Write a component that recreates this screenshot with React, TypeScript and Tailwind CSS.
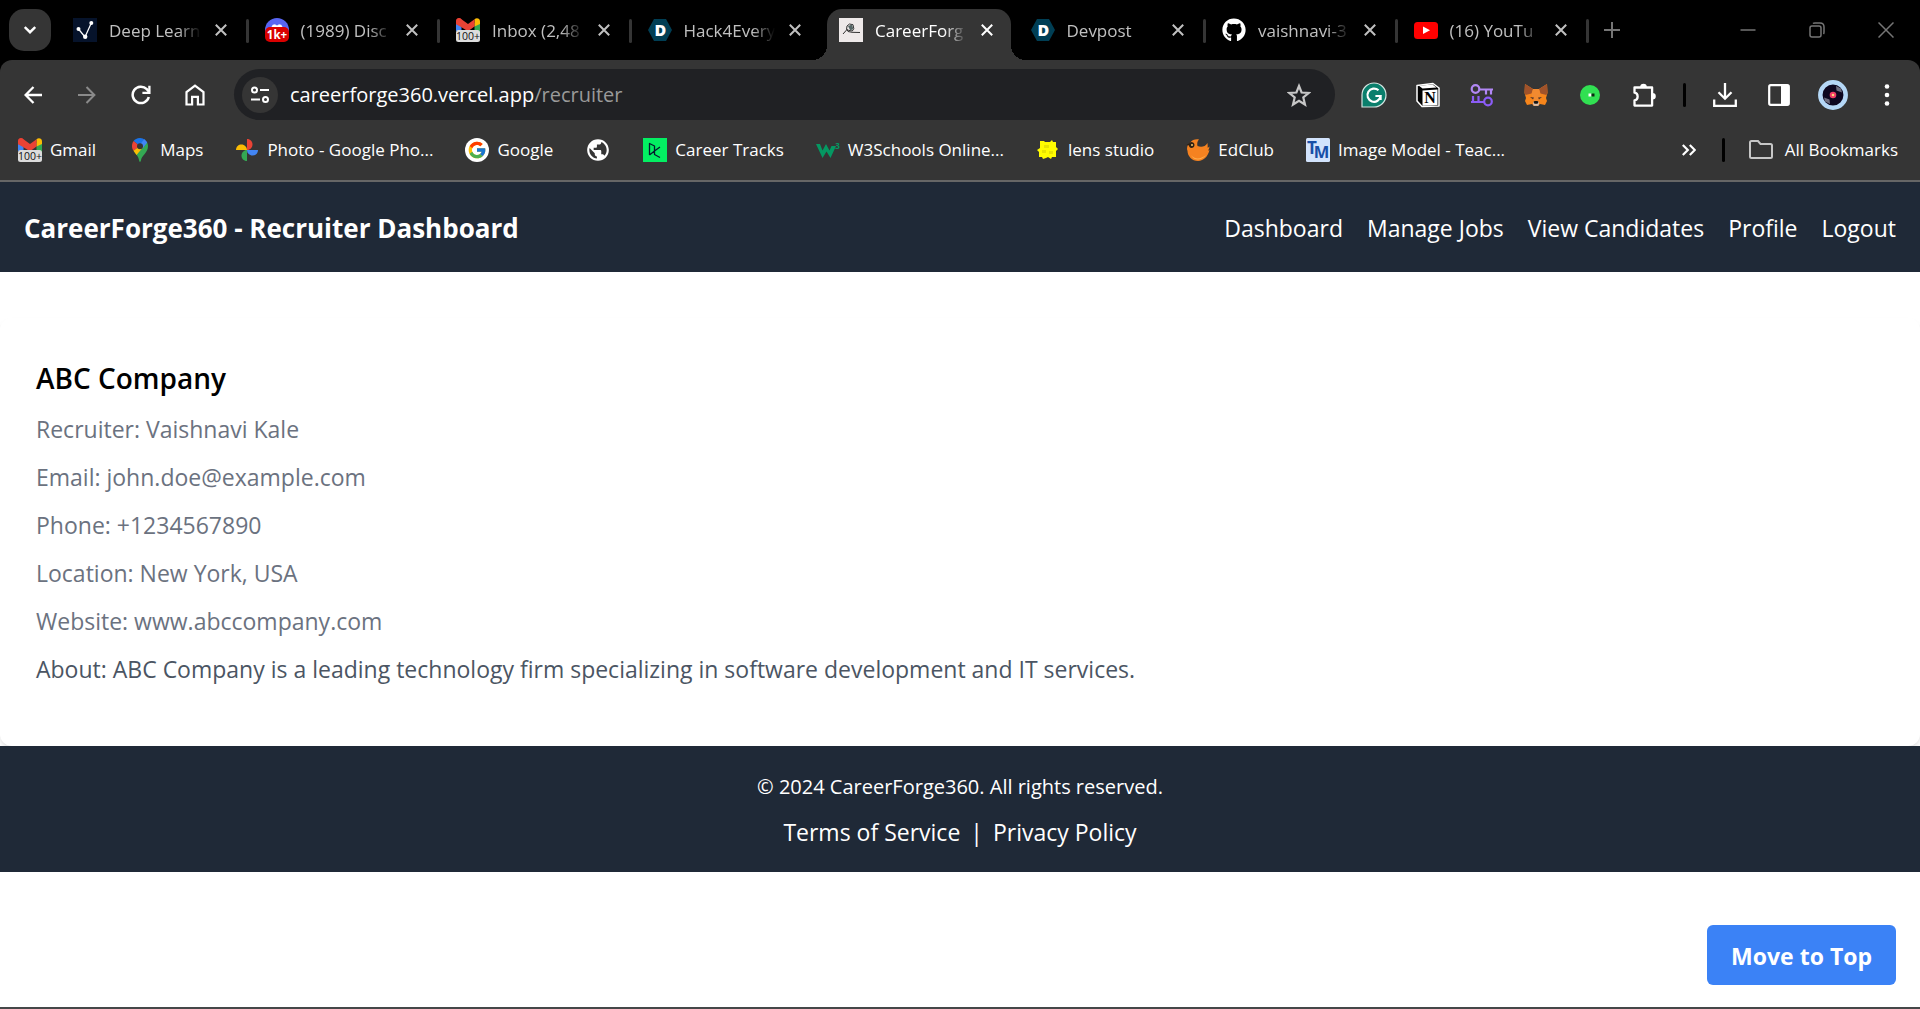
import React from 'react';
import { FaGithub } from 'react-icons/fa';
import { FcGoogle } from 'react-icons/fc';
import { MdPublic } from 'react-icons/md';

type IconProps = { className?: string };

const CloseIcon = ({ className }: IconProps) => (
  <svg className={className} viewBox="0 0 12 12" fill="none" stroke="currentColor" strokeWidth="2">
    <path d="M.8.8l10.4 10.4M11.2.8L.8 11.2" />
  </svg>
);

const NodesIcon = () => (
  <svg viewBox="0 0 24 24" className="size-6">
    <rect width="24" height="24" fill="#06132b" />
    <path d="M5.5 11l6.500 8 6.300-14" fill="none" stroke="#fff" strokeWidth="1.2" />
    <circle cx="5.5" cy="11" r="2" fill="#fff" />
    <circle cx="12.2" cy="18.7" r="2.2" fill="#fff" />
    <circle cx="18.3" cy="5" r="2" fill="#fff" />
  </svg>
);

const DiscordIcon = () => (
  <svg viewBox="0 0 24 24" className="size-6">
    <circle cx="12" cy="12" r="12" fill="#5865f2" />
    <path d="M6 11c.4-2 1.2-3.5 1.8-4.2l2.5-.6.6 1h2.2l.6-1 2.5.6c.6.7 1.4 2.2 1.8 4.2z" fill="#fff" />
    <rect y="9" width="24" height="15" rx="5" fill="#d90000" />
    <text x="12" y="20.5" textAnchor="middle" fontSize="11.5" fontWeight="700" fill="#fff">1k+</text>
  </svg>
);

const GmailIcon = () => (
  <svg viewBox="0 0 24 24" className="size-6">
    <path d="M0 4v9h5.500V5z" fill="#4285f4" />
    <path d="M18.500 5v15H24V4z" fill="#34a853" />
    <path d="M18.500 8.500V1.200c2-2 5.500-1 5.500 2V6z" fill="#fbbc04" />
    <path d="M5.500 8.500V1.200C3.500-.8 0 .2 0 3.200V6z" fill="#c5221f" />
    <path d="M0 3C.2 0 3.500-.8 5.500 1.200L12 6l6.500-4.800v7.300L12 13.300 0 6z" fill="#ea4335" />
    <rect y="12" width="24" height="12" rx="2.5" fill="#dcdcdc" />
    <text x="12" y="22" textAnchor="middle" fontSize="10.5" fontWeight="500" fill="#111">100+</text>
  </svg>
);

const DevpostIcon = () => (
  <svg viewBox="0 0 24 24" className="size-6">
    <path d="M6 1h12l6 11-6 11H6L0 12z" fill="#003e54" />
    <text x="12.3" y="17.7" textAnchor="middle" fontSize="16" fontWeight="800" fill="#fff">D</text>
  </svg>
);

const SketchIcon = () => (
  <svg viewBox="0 0 24 24" className="size-6">
    <rect width="24" height="24" fill="#eee9e9" />
    <path d="M4 16l4-4.500 1 2 4 .8 8 .2M7.500 11.500l.5-3.500 2.500-2 3.500.7.8 4-1.500 2.300-3.500-.6z" fill="none" stroke="#333" />
    <path d="M9 8l4-1.500 1.300 4.500-3 1.500z" fill="#566" />
  </svg>
);

const YoutubeIcon = () => (
  <svg viewBox="0 0 24 24" className="size-6">
    <rect y="4" width="24" height="17" rx="3.5" fill="#f00" />
    <path d="M9 8.500v7.500l7-3.800z" fill="#fff" />
  </svg>
);

const MapsIcon = () => (
  <svg viewBox="0 0 24 24" className="size-6">
    <path d="M5.6 12.800c1.800 3.500 5 5.200 5.500 9.700.1.800.4 1.300.9 1.300s.8-.5.9-1.300c.7-5 7.100-7.500 7.100-14.200 0-1.800-.5-3.200-1.100-4.300z" fill="#34a853" />
    <path d="M12 0C8.800 0 6.900 1.400 5.600 3l6.400 5.300L17 2c-1.300-1.200-3-2-5-2z" fill="#1a73e8" />
    <path d="M5.600 3C4.500 4.500 4 6.300 4 8.200c0 1.800.6 3.300 1.500 4.600L12 8.200z" fill="#ea4335" />
    <path d="M5.500 12.800c.8 1.500 2 2.700 3 4.200l7-8.200L12 8z" fill="#fbbc04" />
    <path d="M16.200 1.300L12 6.500l3 3.500 4.200-5.500c-.7-1.300-1.700-2.500-3-3.200z" fill="#4285f4" />
    <circle cx="12" cy="8.200" r="3" fill="#353535" />
  </svg>
);

const PhotosIcon = () => (
  <svg viewBox="0 0 24 24" className="size-6">
    <path d="M12 12V1c3.500 0 5.500 2.500 5.500 5.500S15 12 12 12z" fill="#ea4335" />
    <path d="M12 12h11c0 3.500-2.500 5.500-5.500 5.500S12 15 12 12z" fill="#4285f4" />
    <path d="M12 12v11c-3.500 0-5.500-2.500-5.500-5.500S9 12 12 12z" fill="#34a853" />
    <path d="M12 12H1c0-3.500 2.500-5.500 5.500-5.500S12 9 12 12z" fill="#fbbc04" />
  </svg>
);

const GoogleIcon = () => (
  <span className="flex size-6 items-center justify-center rounded-full bg-white">
    <FcGoogle className="size-5" />
  </span>
);

const DataCampIcon = () => (
  <svg viewBox="0 0 24 24" className="size-6">
    <rect width="24" height="24" fill="#03ef62" />
    <path d="M6.500 17V5.500l5 2.500v5l-5 4M17 9l-5.500 4v3.500l5.500 3" fill="none" stroke="#05192d" strokeWidth="1.3" strokeLinejoin="round" />
  </svg>
);

const W3Icon = () => (
  <svg viewBox="0 0 24 24" className="size-6">
    <path d="M0 6h4l2.500 6.500L10 6l3.500 6.500L15.500 8H20l-5.500 12-4-6.500L6.500 20z" fill="#059862" />
    <text x="21.5" y="10.5" textAnchor="middle" fontSize="8" fontWeight="700" fill="#059862">3</text>
  </svg>
);

const LensIcon = () => (
  <svg viewBox="0 0 24 24" className="size-6">
    <path d="M4 3h4l1 1h5l2-2 1 2h3v5l2 2-2 2v6h-4l-1 2-3-2-2 1-3 1-1-2H3v-5l-2-2 3-2z" fill="#fffc00" />
    <path d="M8 7h5v3H8zM13 13h4v3h-4zM6 12h4v3H6z" fill="#e8e300" />
  </svg>
);

const EdClubIcon = () => (
  <svg viewBox="0 0 24 24" className="size-6">
    <path d="M1 11c0-3 1-5 3-6 2-3.500 6-4 9-3.500-2 2-2 4.500-1.500 6.500C15 9.500 19 9 21.500 5c0 2 .5 3 0 4.500 1 0 1.500-.5 2-1-.2 2-.8 3-1.500 4l1.500-.2C22 18 18 23 12 23S1.500 18 1.500 13z" fill="#f58220" />
    <path d="M5 17c3 4 9 5 15 0-3 5-12 7-15 0z" fill="#ffb04d" />
    <path d="M.5 7L5 4c2 0 3.500 1 3.500 3S7 10 5.500 10 3 9 3 7.500z" fill="#2d2014" />
    <circle cx="6" cy="7" r="1" fill="#f9c46b" />
  </svg>
);

const TeachableIcon = () => (
  <svg viewBox="0 0 24 24" className="size-6">
    <rect width="24" height="24" rx="1.5" fill="#d2e3fc" />
    <text x="6" y="15.5" textAnchor="middle" fontSize="17" fontWeight="700" fill="#174ea6">T</text>
    <text x="15.500" y="19.700" textAnchor="middle" fontSize="16.500" fontWeight="700" fill="#174ea6">M</text>
  </svg>
);

const tabs = [
  { title: 'Deep Learn', icon: <NodesIcon /> },
  { title: '(1989) Disc', icon: <DiscordIcon /> },
  { title: 'Inbox (2,48', icon: <GmailIcon /> },
  { title: 'Hack4Every', icon: <DevpostIcon /> },
  { title: 'CareerForg', icon: <SketchIcon />, active: true },
  { title: 'Devpost', icon: <DevpostIcon /> },
  { title: 'vaishnavi-3', icon: <FaGithub className="size-6 text-white" /> },
  { title: '(16) YouTu', icon: <YoutubeIcon /> },
];

const bookmarks = [
  { label: 'Gmail', icon: <GmailIcon /> },
  { label: 'Maps', icon: <MapsIcon /> },
  { label: 'Photo - Google Pho...', icon: <PhotosIcon /> },
  { label: 'Google', icon: <GoogleIcon /> },
  { label: '', icon: <MdPublic className="size-[26px]" /> },
  { label: 'Career Tracks', icon: <DataCampIcon /> },
  { label: 'W3Schools Online...', icon: <W3Icon /> },
  { label: 'lens studio', icon: <LensIcon /> },
  { label: 'EdClub', icon: <EdClubIcon /> },
  { label: 'Image Model - Teac...', icon: <TeachableIcon /> },
];

const navLinks = ['Dashboard', 'Manage Jobs', 'View Candidates', 'Profile', 'Logout'];

const details = [
  'Recruiter: Vaishnavi Kale',
  'Email: john.doe@example.com',
  'Phone: +1234567890',
  'Location: New York, USA',
  'Website: www.abccompany.com',
];

const TabStrip: React.FC = () => (
  <div className="flex h-[60px] bg-black">
    <div className="w-[59px] shrink-0 pl-[9px] pt-[9px]">
      <button aria-label="Search tabs" className="flex size-[42px] items-center justify-center rounded-[15px] bg-[#353535]">
        <svg viewBox="0 0 12 8" className="h-2 w-3" fill="none" stroke="#fff" strokeWidth="2.4">
          <path d="M.8 1L6 6.200 11.200 1" />
        </svg>
      </button>
    </div>
    <div className="flex max-w-[1532px] flex-1" role="tablist">
      {tabs.map((tab, i) => (
        <div
          key={i}
          role="tab"
          aria-selected={!!tab.active}
          className="relative flex min-w-0 flex-1 pt-[9px]"
        >
          {tab.active && (
            <>
              <span className="absolute bottom-0 -left-[13px] size-[15px] bg-[radial-gradient(circle_at_0_0,transparent_15px,#353535_15px)]" />
              <span className="absolute bottom-0 -right-[9px] size-[15px] bg-[radial-gradient(circle_at_100%_0,transparent_15px,#353535_15px)]" />
            </>
          )}
          <div
            className={`ml-0.5 mr-1.5 flex min-w-0 flex-1 items-center rounded-t-[15px] pb-[9px] pl-3 pr-[18px] ${
              tab.active ? 'bg-[#353535] text-white' : 'text-[#c0c0c0]'
            }`}
          >
            <span className="shrink-0">{tab.icon}</span>
            <span className="ml-3 min-w-0 flex-1 overflow-hidden whitespace-nowrap pt-0.5 text-[17px] [mask-image:linear-gradient(to_right,#000_75%,transparent)]">
              {tab.title}
            </span>
            <button aria-label={`Close ${tab.title}`} className="ml-3.5 shrink-0">
              <CloseIcon className="size-3" />
            </button>
          </div>
          {/* no divider on either side of the active tab */}
          {!tab.active && !tabs[i + 1]?.active && (
            <span className="absolute right-[2px] top-[19px] h-6 w-[3px] rounded-full bg-[#353535]" />
          )}
        </div>
      ))}
    </div>
    <button aria-label="New tab" className="flex w-[42px] items-center justify-center text-[#757575]">
      <svg viewBox="0 0 16 16" className="size-4" stroke="currentColor" strokeWidth="2">
        <path d="M8 0v16M0 8h16" />
      </svg>
    </button>
    <div className="ml-auto flex text-[#757575]">
      <button aria-label="Minimize" className="flex w-[69px] items-center justify-center">
        <svg viewBox="0 0 16 16" className="size-4" stroke="currentColor" strokeWidth="1.5">
          <path d="M.5 8h15" />
        </svg>
      </button>
      <button aria-label="Restore" className="flex w-[69px] items-center justify-center">
        <svg viewBox="0 0 16 16" className="size-4" fill="none" stroke="currentColor" strokeWidth="1.5">
          <rect x="1" y="4" width="11" height="11" rx="2" />
          <path d="M4 1.500C4.500 1 5 1 6 1h5c2.500 0 4 1.500 4 4v5c0 1 0 1.500-.5 2" />
        </svg>
      </button>
      <button aria-label="Close window" className="flex w-[69px] items-center justify-center">
        <svg viewBox="0 0 16 16" className="size-4" fill="none" stroke="currentColor" strokeWidth="1.5">
          <path d="M.5.5l15 15M15.500.5l-15 15" />
        </svg>
      </button>
    </div>
  </div>
);

const ToolButton = ({ label, children }: { label: string; children: React.ReactNode }) => (
  <button aria-label={label} className="flex h-[51px] w-[54px] shrink-0 items-center justify-center">
    {children}
  </button>
);

const Toolbar: React.FC = () => (
  <div className="flex items-center px-1.5 pt-[9px] text-white">
    <ToolButton label="Back">
      <svg viewBox="0 0 18 18" className="size-[18px]" fill="none" stroke="currentColor" strokeWidth="2.3">
        <path d="M18 9H2M9.500 1L1.600 9l7.900 8" />
      </svg>
    </ToolButton>
    <ToolButton label="Forward">
      <svg viewBox="0 0 18 18" className="size-[18px] text-[#8a8a8a]" fill="none" stroke="currentColor" strokeWidth="2">
        <path d="M0 9h16M8.500 1l7.900 8-7.900 8" />
      </svg>
    </ToolButton>
    <ToolButton label="Reload">
      <svg viewBox="0 0 20 20" className="size-5" fill="none" stroke="currentColor" strokeWidth="2.5">
        <path d="M17.800 12A8.200 8.200 0 1 1 15.800 4.200L18 6.800" />
        <path d="M18.400.8v7h-7" strokeWidth="2.3" />
      </svg>
    </ToolButton>
    <ToolButton label="Home">
      <svg viewBox="0 0 20 22" className="h-[22px] w-5" fill="none" stroke="currentColor" strokeWidth="2.2">
        <path d="M1.500 20.500V8L10 1.600 18.500 8v12.500h-5.600v-7.700H7.100v7.700z" />
      </svg>
    </ToolButton>

    <div className="mx-3 flex h-[51px] flex-1 items-center rounded-full bg-[#202124] px-2">
      <button aria-label="View site information" className="mr-3 flex size-9 shrink-0 items-center justify-center rounded-full bg-[#353535]">
        <svg viewBox="0 0 18 18" className="size-[18px]" fill="none" stroke="#fff" strokeWidth="2">
          <circle cx="3.5" cy="4" r="2.5" />
          <path d="M9 4h9M0 13.500h9" />
          <circle cx="14.5" cy="13.5" r="2.5" />
        </svg>
      </button>
      <input
        aria-label="Address"
        readOnly
        value="careerforge360.vercel.app"
        className="field-sizing-content bg-transparent text-xl text-white outline-none"
      />
      <span className="text-xl text-[#9a9a9a]">/recruiter</span>
      <button aria-label="Bookmark this page" className="ml-auto mr-4">
        <svg viewBox="0 0 24 24" className="size-6" fill="none" stroke="#c7c7c7" strokeWidth="2.2">
          <path d="M12 3l2.600 6.500 7 .5-5.300 4.500 1.700 7-6-3.800-6 3.800 1.700-7L2.400 10l7-.5z" />
        </svg>
      </button>
    </div>

    <ToolButton label="Grammarly">
      <svg viewBox="0 0 26 26" className="size-[26px]">
        <path d="M13 1a12 12 0 1 1 0 24H1V13A12 12 0 0 1 13 1z" fill="#0a7f6c" stroke="#d5e5e2" strokeWidth="1.2" />
        <path d="M17.500 8.300A6.600 6.600 0 1 0 19.600 14h-5.200M19.600 13v5" fill="none" stroke="#fff" strokeWidth="2.2" />
      </svg>
    </ToolButton>
    <ToolButton label="Notion">
      <svg viewBox="0 0 26 26" className="size-[26px]">
        <path d="M2 3.500L18 1.500l6 4.500v18l-17 .5L2 19z" fill="#000" stroke="#fff" strokeWidth="1.5" strokeLinejoin="round" />
        <path d="M4 3.800L17.500 2.500l4 3L7.500 6.500z" fill="#fff" />
        <path d="M7.500 8.500l15-1v15.500l-15 .8z" fill="#fff" />
        <text x="15" y="21" textAnchor="middle" fontSize="16" fontWeight="700" fontFamily="Liberation Serif, serif" fill="#000">N</text>
      </svg>
    </ToolButton>
    <ToolButton label="Passwords">
      <svg viewBox="0 0 24 24" className="size-6" fill="none" strokeWidth="2.2">
        <g stroke="#b288f5">
          <circle cx="5.5" cy="6" r="3.8" />
          <path d="M9.300 6.500H23M16 6.500v5M21 6.500v5" />
        </g>
        <g stroke="#8b5cf6">
          <circle cx="18" cy="18.5" r="3.800" />
          <path d="M1 19h13.200M3 19v-6M8.500 19v-6" />
        </g>
      </svg>
    </ToolButton>
    <ToolButton label="MetaMask">
      <svg viewBox="0 0 24 24" className="size-6">
        <path d="M1 1l8 5h6l8-5 .5 9-1.500 5 1 3-2 4-5-1-2 2h-4l-2-2-5 1-2-4 1-3L.5 10z" fill="#f6851b" />
        <path d="M1 1l8 5-1.500 4.500L1.500 12 .5 9zM23 1l-8 5 1.500 4.500 6 1.500 1-3z" fill="#a0522a" />
        <path d="M9 6h6l1.500 6L14 18h-4l-2.500-6z" fill="#f28a30" />
        <path d="M6 14l4 .5-1 2zM18 14l-4 .5 1 2z" fill="#5a3a2a" />
        <path d="M9 19.500l1-1h4l1 1-.5 3.300h-5z" fill="#d7c1b3" />
        <path d="M9.500 19l1-1h3l1 1-1 1.800h-3z" fill="#161616" />
      </svg>
    </ToolButton>
    <ToolButton label="Recorder">
      <svg viewBox="0 0 20 20" className="size-5">
        <circle cx="10" cy="10" r="10" fill="#31e052" />
        <rect x="8.5" y="8.5" width="3" height="3" fill="#fff" />
        <rect x="11.5" y="8.5" width="3" height="3" fill="#0a2a10" />
      </svg>
    </ToolButton>
    <ToolButton label="Extensions">
      <svg viewBox="0 0 26 26" className="size-[26px]">
        <path d="M3.500 5.500h17.600v18.100H3.500v-5.200c4.200-.5 4.200-7.200 0-7.700z" fill="none" stroke="#fff" strokeWidth="2.3" strokeLinejoin="round" />
        <path d="M9.200 5a3.300 3.300 0 0 1 6.600 0zM21.500 11a3.300 3.300 0 0 1 0 6.600z" fill="#fff" />
      </svg>
    </ToolButton>
    <span className="mx-3 h-6 w-[3px] rounded-full bg-black" />
    <ToolButton label="Downloads">
      <svg viewBox="0 0 24 24" className="size-6" fill="none" stroke="currentColor" strokeWidth="2.3">
        <path d="M12 0v15M5.500 9.200l6.500 6.500 6.500-6.500M1.200 16.500V23h21.600v-6.500" />
      </svg>
    </ToolButton>
    <ToolButton label="Side panel">
      <svg viewBox="0 0 22 22" className="size-[22px]">
        <rect x="1.2" y="1.2" width="19.6" height="19.6" rx="1.5" fill="none" stroke="#fff" strokeWidth="2.2" />
        <path d="M13 1h8v20h-8z" fill="#fff" />
      </svg>
    </ToolButton>
    <ToolButton label="Profile">
      <svg viewBox="0 0 30 30" className="size-[30px]">
        <circle cx="15" cy="15" r="12.7" fill="#0d0720" stroke="#b5d8f7" strokeWidth="4.5" />
        <path d="M18 6l5 2.500 1 4-5.500-2zM12 24l-5-2.500-1-4 5.500 2z" fill="#6f6f80" />
        <circle cx="15" cy="15" r="3.3" fill="#ef3b68" />
        <circle cx="15" cy="15" r="1.3" fill="#ffd27a" />
      </svg>
    </ToolButton>
    <ToolButton label="Menu">
      <svg viewBox="0 0 6 22" className="h-[22px] w-1.5" fill="currentColor">
        <circle cx="3" cy="2.5" r="2.3" />
        <circle cx="3" cy="11" r="2.3" />
        <circle cx="3" cy="19.5" r="2.3" />
      </svg>
    </ToolButton>
  </div>
);

const BookmarkBar: React.FC = () => (
  <div className="flex h-[60px] items-center gap-8 pl-[18px] pr-[22px] text-[17px] text-white">
    {bookmarks.map((b, i) => (
      <a key={i} href="#" aria-label={b.label || 'Bookmark'} className="flex shrink-0 items-center gap-2">
        {b.icon}
        {b.label && <span className="whitespace-nowrap">{b.label}</span>}
      </a>
    ))}
    <div className="ml-auto flex shrink-0 items-center">
      <button aria-label="More bookmarks">
        <svg viewBox="0 0 14 12" className="h-3 w-3.5" fill="none" stroke="currentColor" strokeWidth="2.2">
          <path d="M.8 1l5 5-5 5M7.800 1l5 5-5 5" />
        </svg>
      </button>
      <span className="ml-[26px] mr-6 h-6 w-[3px] rounded-full bg-black" />
      <button className="flex items-center gap-3">
        <svg viewBox="0 0 24 20" className="h-5 w-6" fill="none" stroke="#c7c7c7" strokeWidth="2">
          <path d="M1 2.500C1 1.500 1.500 1 2.500 1H9l2.500 3h10c1 0 1.500.5 1.500 1.500v11c0 1-.5 1.500-1.500 1.500h-19C1.500 18 1 17.500 1 16.500z" />
        </svg>
        <span className="whitespace-nowrap">All Bookmarks</span>
      </button>
    </div>
  </div>
);

const App: React.FC = () => {
  const scrollToTop = () => window.scrollTo({ top: 0, behavior: 'smooth' });

  return (
    <div className="flex min-h-screen flex-col border-b-2 border-[#454749] bg-white font-['Open_Sans','Noto_Sans',sans-serif]">
      <div className="border-b-2 border-[#666666] bg-black">
        <TabStrip />
        <div className="rounded-t-xl bg-[#353535]">
          <Toolbar />
          <BookmarkBar />
        </div>
      </div>

      <header className="flex h-[90px] items-center justify-between bg-[#1f2937] px-6 pt-0.5 text-white">
        <h1 className="text-[26px] font-bold">CareerForge360 - Recruiter Dashboard</h1>
        <nav className="flex gap-6 text-[23px]">
          {navLinks.map((link) => (
            <a key={link} href="#">{link}</a>
          ))}
        </nav>
      </header>

      <main className="pt-[46px]">
        <section className="rounded-xl px-9 pb-[47px] pt-[39px] shadow-md">
          <h2 className="mb-3 text-[28px] font-semibold leading-[42px] text-black">ABC Company</h2>
          {details.map((line) => (
            <p key={line} className="mb-3 text-[23px] leading-9 text-[#6b7280]">{line}</p>
          ))}
          <p className="mb-3 text-[23px] leading-9 text-[#4b5563]">
            About: ABC Company is a leading technology firm specializing in software development and IT services.
          </p>
        </section>
      </main>

      <footer className="relative bg-[#1f2937] pb-[22px] pt-[26px] text-center text-white">
        <p className="text-xl leading-[30px]">© 2024 CareerForge360. All rights reserved.</p>
        <div className="mt-3 flex justify-center gap-2.5 text-[23px] leading-9">
          <a href="#">Terms of Service</a>
          <span>|</span>
          <a href="#">Privacy Policy</a>
        </div>
      </footer>

      <button
        onClick={scrollToTop}
        className="fixed bottom-6 right-6 h-[60px] rounded-md bg-[#3b82f6] px-6 pt-0.5 text-[23px] font-bold text-white"
      >
        Move to Top
      </button>
    </div>
  );
};

export default App;
